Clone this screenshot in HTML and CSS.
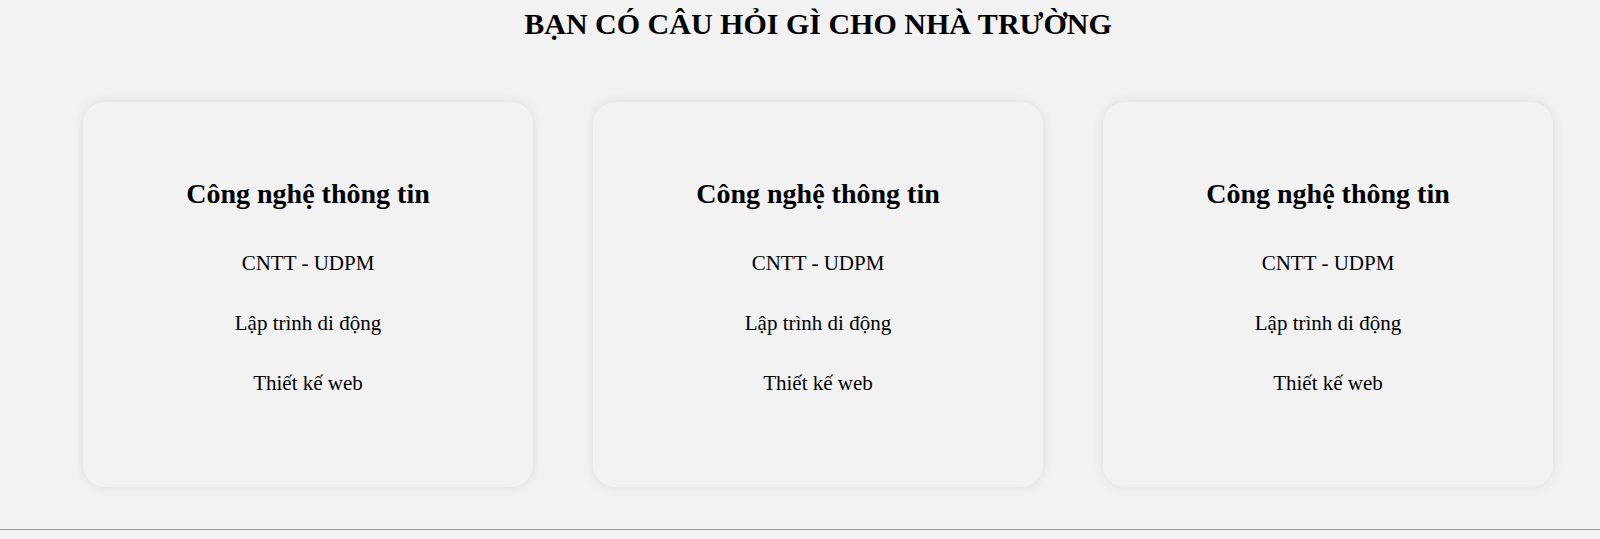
FILE: index.html
```html
<!DOCTYPE html>
<html lang="vi">
<head>
<meta charset="utf-8">
<title>Câu hỏi</title>
<link rel="stylesheet" href="styles.css">
</head>
<body>
<section class="faq">
  <h1 class="faq-title">BẠN CÓ CÂU HỎI GÌ CHO NHÀ TRƯỜNG</h1>
  <div class="cards">
    <div class="card">
      <h2 class="card-title">Công nghệ thông tin</h2>
      <p class="card-item">CNTT - UDPM</p>
      <p class="card-item">Lập trình di động</p>
      <p class="card-item">Thiết kế web</p>
    </div>
    <div class="card">
      <h2 class="card-title">Công nghệ thông tin</h2>
      <p class="card-item">CNTT - UDPM</p>
      <p class="card-item">Lập trình di động</p>
      <p class="card-item">Thiết kế web</p>
    </div>
    <div class="card">
      <h2 class="card-title">Công nghệ thông tin</h2>
      <p class="card-item">CNTT - UDPM</p>
      <p class="card-item">Lập trình di động</p>
      <p class="card-item">Thiết kế web</p>
    </div>
  </div>
</section>
<div class="divider"></div>
</body>
</html>
```
FILE: styles.css
```css
html, body {
  margin: 0;
  padding: 0;
  background: #f2f2f2;
  color: #000;
  font-family: "Liberation Serif", "Times New Roman", serif;
}

.faq {
  padding: 6px 0 42px 36px;
}

.faq-title {
  margin: 0;
  text-align: center;
  font-size: 30px;
  line-height: 36px;
  font-weight: bold;
}

.cards {
  display: flex;
  justify-content: center;
  gap: 60px;
  margin-top: 60px;
}

.card {
  width: 450px;
  box-sizing: border-box;
  padding: 76px 20px 92px;
  background: #f2f2f2;
  border-radius: 22px;
  box-shadow: 0 0 12px rgba(0, 0, 0, 0.09);
  text-align: center;
  display: flex;
  flex-direction: column;
}

.card-title {
  margin: 0 0 41px;
  font-size: 28px;
  line-height: 32px;
  font-weight: bold;
}

.card-item {
  margin: 0 0 36px;
  font-size: 21px;
  line-height: 24px;
}

.card-item:last-child {
  margin-bottom: 0;
}

.divider {
  border-top: 1px solid #999;
  height: 10px;
}
```
